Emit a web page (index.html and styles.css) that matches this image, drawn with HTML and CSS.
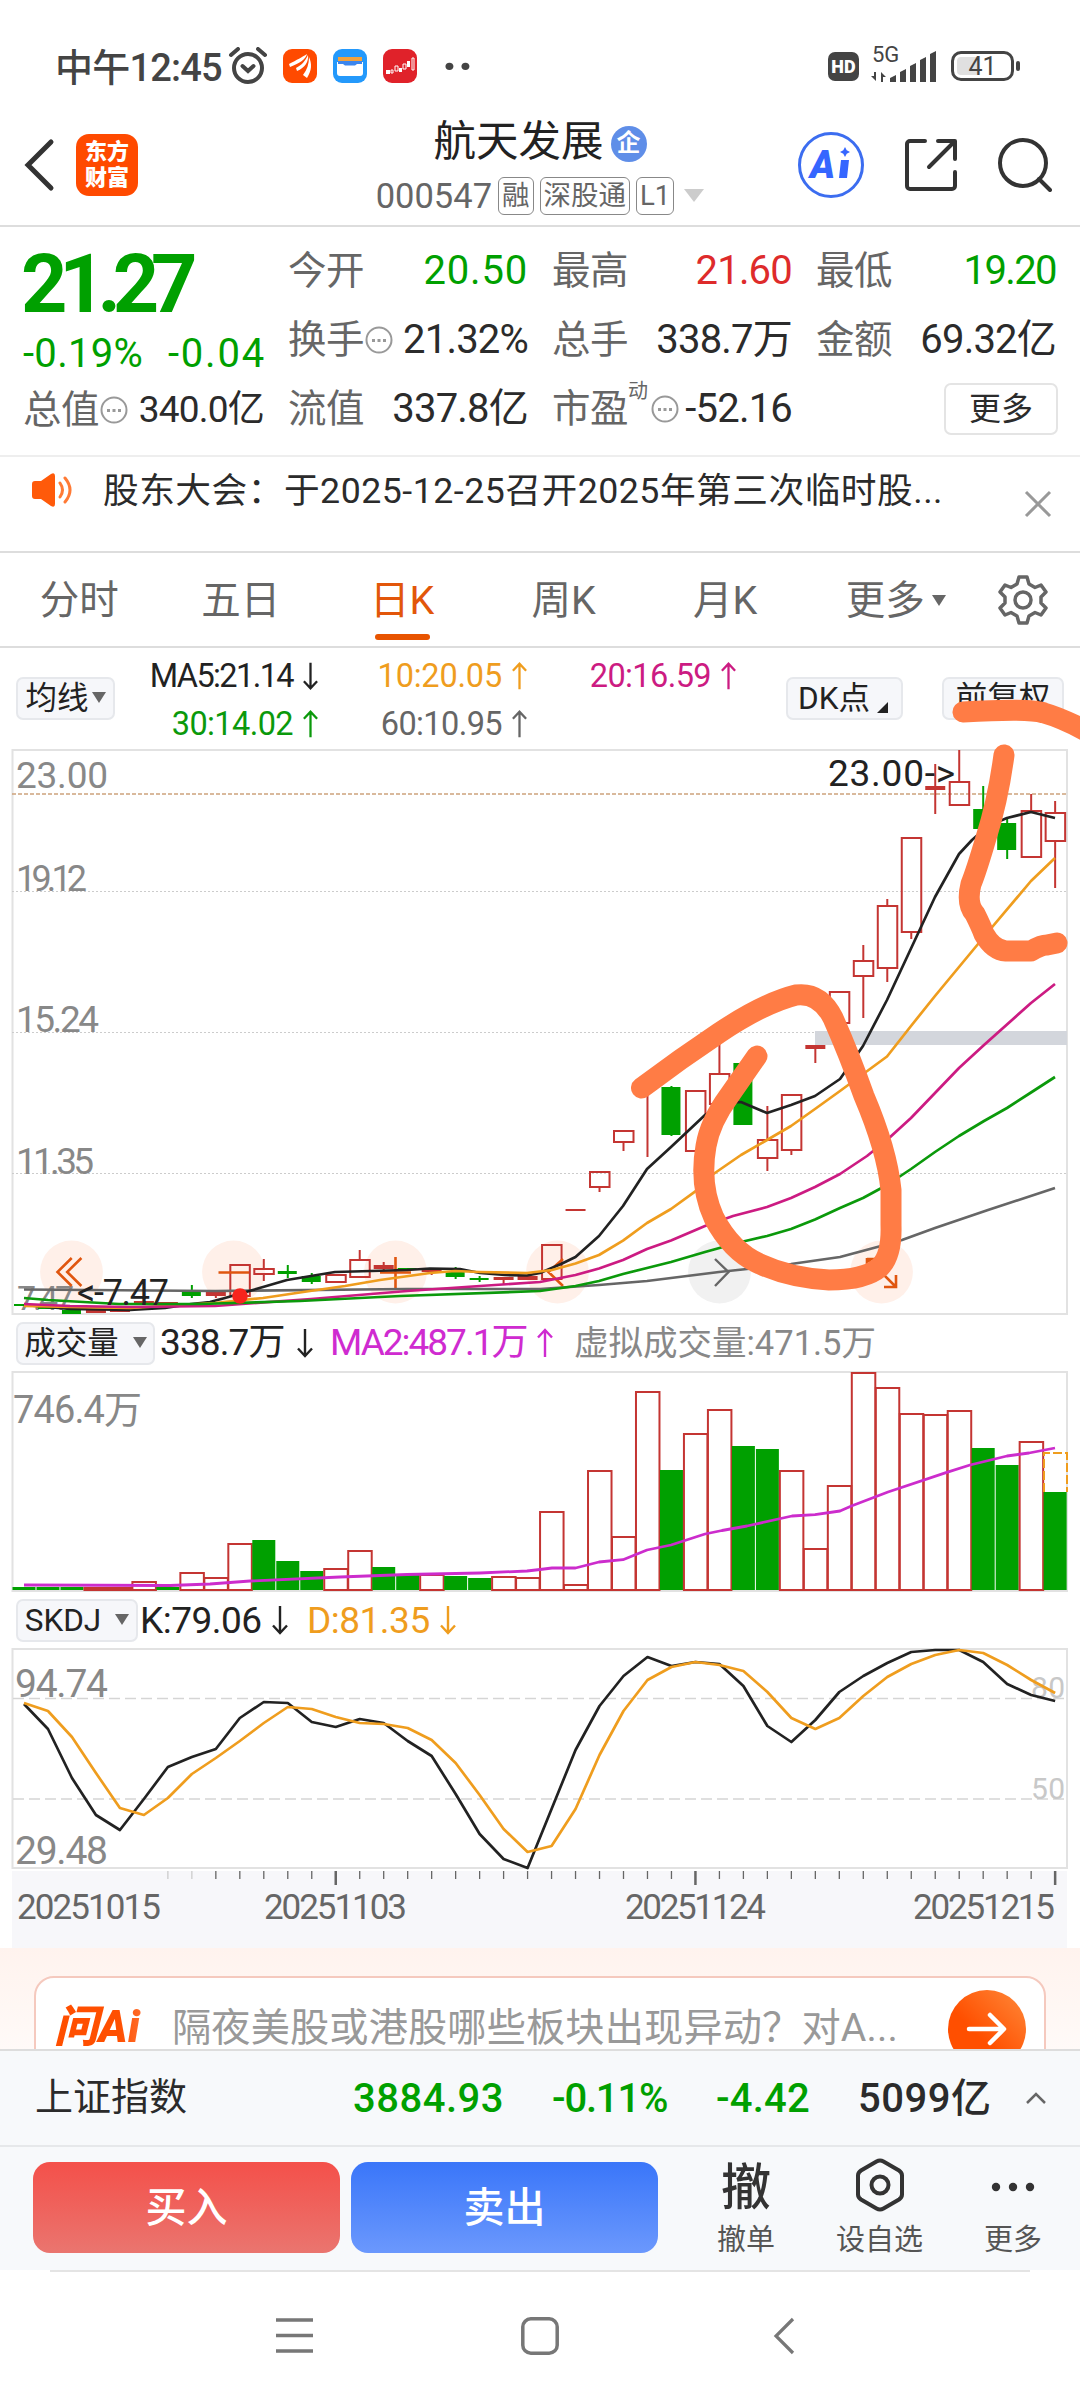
FILE: index.html
```html
<!DOCTYPE html>
<html lang="zh-CN">
<head>
    <meta charset="UTF-8">
    <meta name="viewport" content="width=device-width, initial-scale=1.0">
    <title>航天发展 000547</title>
    <link rel="stylesheet" href="styles.css">
</head>
<body>
    <svg width="0" height="0" class="defs">
        <symbol id="up" viewBox="0 0 18 30"><path d="M9 29V2M2 9.500L9 2l7 7.500" fill="none" stroke="currentColor" stroke-width="2.400"/></symbol>
        <symbol id="down" viewBox="0 0 18 30"><path d="M9 1v27M2 20.500L9 28l7-7.500" fill="none" stroke="currentColor" stroke-width="2.400"/></symbol>
        <symbol id="info" viewBox="0 0 28 28"><circle cx="14" cy="14" r="12.500" fill="none" stroke="#999" stroke-width="2"/><path d="M7 13h3v3H7zm5.500 0h3v3h-3zm5.500 0h3v3h-3z" fill="#999"/></symbol>
    </svg>

    <div class="status">
        <span class="clock">中午12:45</span>
        <svg class="alarm" width="40" height="38" viewBox="0 0 40 38" fill="none" stroke="#444" stroke-width="4" stroke-linecap="round"><circle cx="20" cy="21" r="14"/><path d="M14.500 19l5.500 5 5.500-5M3 8l7-6M37 8l-7-6"/></svg>
        <svg class="app" width="34" height="34" viewBox="0 0 34 34"><rect width="34" height="34" rx="9" fill="#ff4a00"/><path d="M6 15C14 11 19 8 24 5c-1 5-7 9-17 13zM13 19c6-3 9-7 12-13 1 6-3 13-11 16zM20 26c4-5 6-11 6-18 3 7 3 13-2 21z" fill="#fff"/></svg>
        <svg class="app" width="34" height="34" viewBox="0 0 34 34"><rect width="34" height="34" rx="9" fill="#2499fb"/><rect x="5" y="8" width="24" height="5" fill="#f3a23c"/><path d="M4 13h26v11a3 3 0 0 1-3 3H7a3 3 0 0 1-3-3z" fill="#fff"/><path d="M5 12h24v3h-5l-2 1.500H12L10 15H5z" fill="#3b86ee"/></svg>
        <svg class="app" width="34" height="34" viewBox="0 0 34 34"><rect width="34" height="34" rx="9" fill="#e0222a"/><path d="M3 21h4v4H3zM16 19h3v4h-3zM24 12h3v6h-3z" fill="#fff"/><path d="M8 21h2v3H8zM12 17h3v5h-3zM20 15h3v5h-3zM29 9h2v12h-2z" fill="none" stroke="#fff"/></svg>
        <span class="dots">··</span>
        <div class="status-right">
            <span class="hd">HD</span>
            <div class="signal">
                <span class="net">5G</span>
                <svg width="66" height="34" viewBox="0 0 66 34" fill="#444"><path d="M5 23v9l-5-5h3v-4zM10 33V23l5 5h-3v5zM19 33v-4l6-3v7zM29 33V23l6-3v13zM39 33V17l6-3v19zM49 33V11l6-3v25zM59 33V5l6-3v31z"/></svg>
            </div>
            <div class="battery"><span>41</span></div>
        </div>
    </div>

    <div class="header">
        <div class="header-left">
            <svg width="34" height="54" viewBox="0 0 34 54"><path d="M29 4L6 27l23 23" fill="none" stroke="#333" stroke-width="5" stroke-linecap="round"/></svg>
            <div class="logo">东方<br>财富</div>
        </div>
        <div class="header-title">
            <div class="name">航天发展<span class="qi">企</span></div>
            <div class="code">000547<span class="tag">融</span><span class="tag">深股通</span><span class="tag">L1</span><i class="tri-light"></i></div>
        </div>
        <div class="header-right">
            <svg width="66" height="66" viewBox="0 0 66 66"><circle cx="33" cy="33" r="31.500" fill="none" stroke="#3c6df0" stroke-width="3"/><text x="12" y="46" class="ai-text">A</text><path d="M43 28h8l-2 18h-8zM47 15l1.700 3.300L52 20l-3.300 1.700L47 25l-1.700-3.300L42 20l3.300-1.700z" fill="#3566ff"/></svg>
            <svg width="54" height="54" viewBox="0 0 54 54" fill="none" stroke="#333" stroke-width="4" stroke-linecap="round" stroke-linejoin="round"><path d="M21 3H6a3 3 0 0 0-3 3v42a3 3 0 0 0 3 3h42a3 3 0 0 0 3-3V34M34 3h17v18M50 4L25 29"/></svg>
            <svg width="54" height="54" viewBox="0 0 54 54" fill="none" stroke="#333" stroke-width="4" stroke-linecap="round"><circle cx="25" cy="25" r="23"/><path d="M41 41l11 11"/></svg>
        </div>
    </div>

    <div class="quote">
        <div class="quote-main">
            <div class="price">21.27</div>
            <div class="change"><span>-0.19%</span><span class="diff">-0.04</span></div>
            <div class="item"><label>总值</label><svg class="info" width="28" height="28"><use href="#info"/></svg><b>340.0亿</b></div>
        </div>
        <div class="quote-grid">
            <div class="item"><label>今开</label><b class="green open">20.50</b></div>
            <div class="item"><label>最高</label><b class="red">21.60</b></div>
            <div class="item"><label>最低</label><b class="green low">19.20</b></div>
            <div class="item"><label>换手</label><svg class="info" width="28" height="28"><use href="#info"/></svg><b>21.32%</b></div>
            <div class="item"><label>总手</label><b>338.7万</b></div>
            <div class="item"><label>金额</label><b>69.32亿</b></div>
            <div class="item"><label>流值</label><b>337.8亿</b></div>
            <div class="item"><label>市盈</label><sup>动</sup><svg class="info" width="28" height="28"><use href="#info"/></svg><b>-52.16</b></div>
            <div class="item"><button class="more">更多</button></div>
        </div>
    </div>

    <div class="notice">
        <svg width="42" height="34" viewBox="0 0 42 34"><path d="M1 11q0-3 3-3h6L20 1q4-2 4 2v28q0 4-4 2l-10-7H4q-3 0-3-3z" fill="#ff5a0a"/><path d="M29 10q5 7 0 14M34 5q10 12 0 24" fill="none" stroke="#ff7a35" stroke-width="3" stroke-linecap="round"/></svg>
        <p>股东大会：于2025-12-25召开2025年第三次临时股...</p>
        <svg class="close" width="28" height="28" viewBox="0 0 28 28"><path d="M2 2l24 24M26 2L2 26" stroke="#999" stroke-width="3"/></svg>
    </div>

    <div class="tabs">
        <span>分时</span>
        <span>五日</span>
        <span class="active">日K</span>
        <span>周K</span>
        <span>月K</span>
        <span>更多<i class="tri"></i></span>
        <svg width="50" height="52" viewBox="0 0 50 52" fill="none" stroke="#666" stroke-width="3.500" stroke-linejoin="round"><path d="M21 3h8l2 7 6 3.500 6-2.500 5 7-5 5v6l5 5-5 7-6-2.500-6 3.500-2 7h-8l-2-7-6-3.500-6 2.500-5-7 5-5v-6l-5-5 5-7 6 2.500 6-3.500z"/><circle cx="25" cy="26" r="8"/></svg>
    </div>

    <div class="ma-row">
        <button class="pill">均线<i class="tri"></i></button>
        <div class="ma-list">
            <span class="c-black ma5">MA5:21.14<svg><use href="#down"/></svg></span>
            <span class="c-orange ma10">10:20.05<svg><use href="#up"/></svg></span>
            <span class="c-pink">20:16.59<svg><use href="#up"/></svg></span>
            <span class="c-green">30:14.02<svg><use href="#up"/></svg></span>
            <span class="c-gray">60:10.95<svg><use href="#up"/></svg></span>
        </div>
        <button class="pill dk">DK点<i class="corner"></i></button>
        <button class="pill fq">前复权</button>
    </div>

    <svg id="kline" class="chart" width="1080" height="566" viewBox="0 749 1080 566"></svg>

    <div class="sub-row">
        <button class="pill">成交量<i class="tri"></i></button>
        <span class="c-black v1">338.7万</span><svg class="c-black"><use href="#down"/></svg>
        <span class="c-violet v2">MA2:487.1万</span><svg class="c-violet"><use href="#up"/></svg>
        <span class="c-mute v3">虚拟成交量:471.5万</span>
    </div>

    <svg id="volume" class="chart" width="1080" height="221" viewBox="0 1371 1080 221"></svg>

    <div class="sub-row skdj-row">
        <button class="pill">SKDJ<i class="tri"></i></button>
        <span class="c-black s1">K:79.06</span><svg class="c-black"><use href="#down"/></svg>
        <span class="c-orange s2">D:81.35</span><svg class="c-orange"><use href="#down"/></svg>
    </div>

    <svg id="skdj" class="chart" width="1080" height="300" viewBox="0 1648 1080 300"></svg>

    <div class="ask">
        <div class="ask-card">
            <span class="ask-logo">问Ai</span>
            <span class="ask-text">隔夜美股或港股哪些板块出现异动？对A...</span>
            <span class="ask-go"><svg width="44" height="36" viewBox="0 0 44 36"><path d="M4 18h34M25 4l14 14-14 14" fill="none" stroke="#fff" stroke-width="4.500" stroke-linecap="round" stroke-linejoin="round"/></svg></span>
        </div>
    </div>

    <div class="index-bar">
        <span class="i-name">上证指数</span>
        <b class="green i1">3884.93</b>
        <b class="green i2">-0.11%</b>
        <b class="green i3">-4.42</b>
        <b class="i4">5099亿</b>
        <svg width="22" height="14" viewBox="0 0 22 14"><path d="M2 12l9-9 9 9" fill="none" stroke="#666" stroke-width="2.500"/></svg>
    </div>

    <div class="trade">
        <button class="buy">买入</button>
        <button class="sell">卖出</button>
        <div class="act a1"><span class="che">撤</span>撤单</div>
        <div class="act a2"><span class="ico"><svg width="50" height="54" viewBox="0 0 50 54" fill="none" stroke="#333" stroke-width="4"><path d="M21.500 3.500q3.500-2 7 0L44 12.500q3 2 3 5v19q0 3-3 5l-15.500 9q-3.500 2-7 0L6 41.500q-3-2-3-5v-19q0-3 3-5z"/><circle cx="25" cy="27" r="8.500"/></svg></span>设自选</div>
        <div class="act a3"><span class="ico"><svg width="44" height="54" viewBox="0 0 44 54" fill="#333"><circle cx="5" cy="29" r="4.200"/><circle cx="22" cy="29" r="4.200"/><circle cx="39" cy="29" r="4.200"/></svg></span>更多</div>
    </div>

    <div class="nav">
        <svg width="38" height="38" viewBox="0 0 38 38"><path d="M0 3h37M0 18.500h37M0 34h37" stroke="#777" stroke-width="3.500"/></svg>
        <svg class="home" width="38" height="38" viewBox="0 0 38 38"><rect x="1.800" y="1.800" width="34.400" height="34.400" rx="8" fill="none" stroke="#777" stroke-width="3.500"/></svg>
        <svg width="22" height="38" viewBox="0 0 22 38"><path d="M20 2L3 19l17 17" fill="none" stroke="#777" stroke-width="3.200"/></svg>
    </div>

    <!-- hand drawn marks -->
    <svg class="marks" width="1080" height="700" viewBox="0 650 1080 700">
        <path d="M641.500 1088Q680 1059 719 1033Q764 1003 796 995Q820 992 833 1018Q849 1054 864 1096Q887 1150 891 1190V1225Q892 1255 880 1267Q865 1280 829 1280Q790 1278 760 1264Q732 1252 714 1218Q699 1185 706 1146Q710 1122 729 1096L757 1056"/>
        <path d="M1004 755Q998 800 986 838Q976 872 971 884Q966 904 975 914Q981 926 984 934Q993 950 1006 951H1031Q1041 945 1047 945L1057 943"/>
        <path d="M963 712Q1030 708 1044 713Q1062 718 1088 732"/>
    </svg>

    <script src="chart.js"></script>
</body>
</html>
```

FILE: chart.js
```js
const RED = '#c43532', GREEN = '#00a000';
const cx = i => 24 + i * 23.98;

function frame(top, bottom) {
    return `<rect x="12.500" y="${top}" width="1054.500" height="${bottom - top}" fill="none" stroke="#e2e2e2" stroke-width="2"/>`;
}
function line(points, color, w) {
    return `<polyline points="${points}" fill="none" stroke="${color}" stroke-width="${w || 2.7}" stroke-linejoin="round"/>`;
}
function label(t, x, y, w, color, size) {
    return `<text x="${x}" y="${y}" textLength="${w}" fill="${color}" font-size="${size || 37}">${t}</text>`;
}

// type, body top, body bottom, wick top, wick bottom (f = filled red)
const candles = [
    ['g',1304,1306],['g',1307,1309],['g',1310,1314],['f',1310,1313],['f',1308,1312],['f',1301,1303],['f',1302,1304],
    ['g',1291,1296,1285,1298],['f',1292,1296,1290,1298],['r',1265,1296],['r',1269,1274,1259,1281],['g',1271,1274,1265,1278],
    ['g',1276,1282,1273,1284],['r',1275,1282],['r',1260,1277,1250],['f',1265,1269,1262,1271],['g',1268,1270],['f',1270,1272,1270,1275],
    ['g',1272,1277,1267,1279],['g',1278,1280,1276,1282],['f',1277,1280,1277,1285],['f',1276,1280],['r',1245,1279],['f',1209,1211],
    ['r',1172,1187,1172,1192],['r',1131,1142,1131,1151],['f',1090,1092,1085,1157],['g',1087,1135,1086,1136],['r',1091,1151],
    ['r',1074,1104,1043],['g',1063,1125],['r',1140,1158,1106,1171],['r',1095,1150,1095,1155],['f',1045,1049,1045,1063],
    ['r',992,1023],['r',961,976,945,1018],['r',906,968,899,982],['r',838,932,838,939],['f',786,790,764,814],
    ['r',782,805,750],['g',809,829,786,830],['g',823,850,818,859],['r',811,857,794],['r',813,841,801,888]
];

const volumes = [
    'g1587','g1587','g1587','r1588','r1588','r1582','g1587','r1573','r1578','r1544','g1540','g1561','g1571','r1569','r1551',
    'g1567','g1575','r1575','g1576','g1578','r1577','r1578','r1512','r1585','r1471','r1537','r1392','g1470','r1434','r1410',
    'g1446','g1449','r1471','r1549','r1486','r1373','r1388','r1414','r1415','r1411','g1448','g1465','r1442','g1492'
];

const K = [1704,1729,1778,1815,1830,1799,1767,1757,1749,1718,1702,1703,1722,1727,1719,1723,1741,1756,1794,1834,1859,1868,
    1809,1750,1706,1676,1657,1666,1662,1664,1686,1726,1742,1720,1692,1676,1663,1652,1650,1650,1662,1684,1695,1701];
const D = [1703,1711,1737,1773,1808,1815,1798,1774,1758,1741,1723,1707,1709,1717,1723,1724,1728,1740,1763,1795,1829,1852,
    1846,1809,1755,1711,1680,1667,1662,1665,1671,1692,1718,1729,1718,1696,1677,1664,1655,1650,1653,1665,1680,1693];

function drawKline() {
    let s = frame(750, 1314);
    [891.5, 1032.5, 1173.5].forEach(y => {
        s += `<line x1="12" x2="1067" y1="${y}" y2="${y}" stroke="#ccc" stroke-dasharray="2 2"/>`;
    });
    s += '<line x1="12" x2="1067" y1="794" y2="794" stroke="#cda27c" stroke-width="1.600" stroke-dasharray="4 2"/>';
    s += '<rect x="815" y="1031" width="252" height="14" fill="#d3d6dc"/>';
    [71.5, 233.5, 395.5, 557.5, 719.5, 881.5].forEach((x, i) => {
        s += `<circle cx="${x}" cy="1272" r="31.400" fill="${i === 4 ? '#f1f1f1' : '#fff0e9'}"/>`;
    });
    s += label('23.00', 16, 788, 92, '#888') + label('19.12', 16, 891, 71, '#888', 36) + label('15.24', 16, 1032, 83, '#888') +
        label('11.35', 16, 1174, 78, '#888') + label('7.47', 17, 1310, 57, '#888', 34);

    candles.forEach((c, i) => {
        const [type, t, b] = c, x = cx(i);
        const wt = c[3] || t, wb = c[4] || b, color = type === 'g' ? GREEN : RED;
        if (wt < t) s += `<line x1="${x}" x2="${x}" y1="${wt}" y2="${t}" stroke="${color}" stroke-width="2"/>`;
        if (wb > b) s += `<line x1="${x}" x2="${x}" y1="${b}" y2="${wb}" stroke="${color}" stroke-width="2"/>`;
        if (type === 'r') s += `<rect x="${x - 9.5}" y="${t}" width="19.500" height="${b - t}" fill="none" stroke="${color}" stroke-width="2"/>`;
        else if (i !== 26) s += `<rect x="${x - 10}" y="${t}" width="${type === 'g' ? 19 : 20}" height="${b - t}" fill="${color}"/>`;
    });

    s += '<g fill="none" stroke="#e0560f" stroke-width="2.600"><path d="M71.700 1258L57.500 1272l14.200 14M81.400 1258L67.200 1272l14.200 14M218.500 1272.500H249M380 1272.500h31M395.500 1257v31M563 1259l-14.500 13 14.500 14M867 1259h12M867 1258v12M868 1259l27 27M884 1287h12v-12"/></g>';
    s += '<path d="M715 1259l13.500 13-13.500 14" fill="none" stroke="#666" stroke-width="2.400"/>';

    s += line('24,1289.500 215,1291 407,1289 540,1289 599,1285 623,1283 647,1281 671,1278 719,1272 747,1269 791,1264 840,1257 881,1246 902,1240 935,1228 988,1210 1055,1188', '#666');
    s += line('24,1305 70,1309 130,1310 165,1308 191,1304 210,1302 225,1298 239,1294 263,1287 287,1280 311,1276 335,1272 407,1270 430,1268.500 460,1269 480,1273 505,1275 527,1275.500 540,1273 561,1264 575.500,1257 599,1236 623,1206 647,1169 671,1147 705,1115 728,1103 741,1102 767,1113 791,1105 815,1096 840,1079 863,1046 887,1000 911,948.500 935,897 959,854 972,840 988,826 1007,818 1031,812 1055,818', '#222');
    s += line('24,1306 70,1307 130,1308 215,1303 263,1298 310,1291 345,1286 380,1280 430,1273 455,1271 480,1272 527,1273 552,1270 575.500,1263.500 599,1255 623,1240.600 647,1223 671,1209 695,1191.600 712,1175 741,1155 767,1140 791,1126 815,1109 840,1091 887,1056.500 911,1026 935,996 959,967 988,932 1031,881 1055,858', '#ef9d1e');
    s += line('24,1304 70,1306 130,1307 215,1306 311,1299 407,1291 480,1286 540,1282 575.500,1275 599,1268.500 623,1260 647,1249 671,1240.600 705,1226 733,1216 767,1207 791,1198 815,1187 840,1174 867,1156 888,1139 911,1118 935,1093 959,1068 984,1045 1031,1003 1055,984', '#cc1b82');
    s += line('24,1298 48,1300 119,1304 200,1304 300,1301 400,1296 540,1291 575.500,1286 599,1281 623,1274 647,1268 671,1262 705,1252 741,1242 767,1236 791,1229 815,1219.500 840,1208 863,1198 887,1185 911,1169 935,1152 959,1136 984,1121 1007,1108 1031,1092.500 1055,1077', '#0b990b');
    s += '<circle cx="240" cy="1296" r="7.800" fill="#f7241d"/>';
    s += label('&lt;-7.47', 77, 1305, 92, '#222', 36) + label('23.00-&gt;', 828, 786, 127, '#222', 37);
    document.getElementById('kline').innerHTML = s;
}

function drawVolume() {
    let s = frame(1372, 1591) + label('746.4万', 13, 1423, 129, '#888', 38);
    volumes.forEach((v, i) => {
        const t = +v.slice(1), x = 12.5 + i * 23.98;
        if (v[0] === 'g') s += `<rect x="${x}" y="${t}" width="23" height="${1590 - t}" fill="${GREEN}"/>`;
        else s += `<rect x="${x}" y="${t}" width="23.500" height="${1590 - t}" fill="none" stroke="${RED}" stroke-width="2"/>`;
    });
    s += '<path d="M1044 1492v-39h23v39" fill="none" stroke="#ef9d1e" stroke-width="2" stroke-dasharray="9 3"/>';
    s += line('24,1585 170,1585.500 210,1584 250,1581 340,1577 407,1574.500 480,1573 527,1571 540,1569.500 552,1568 575.500,1568 599,1562 623,1559.700 647,1550 671,1545 705,1534 722,1530.500 747,1526 792,1516 815,1514.700 840,1511 852,1505.700 888,1492 946,1472.700 970,1465 1007,1456 1029,1453 1055,1448', '#cc2ccc', 2.8);
    document.getElementById('volume').innerHTML = s;
}

function drawSkdj() {
    let s = '<rect x="12" y="1871" width="1055" height="77" fill="#f7f7fa"/>' + frame(1649, 1868);
    [1698.5, 1799].forEach(y => {
        s += `<line x1="13" x2="1066" y1="${y}" y2="${y}" stroke="#d5d5d5" stroke-width="1.500" stroke-dasharray="11 5"/>`;
    });
    s += label('94.74', 15, 1697, 93, '#888', 39) + label('29.48', 15, 1864, 93, '#888', 39);
    s += label('80', 1031, 1698, 34, '#c8c8c8', 30) + label('50', 1031, 1799, 34, '#c8c8c8', 30);
    s += line(K.map((y, i) => cx(i) + ',' + y).join(' '), '#222') + line(D.map((y, i) => cx(i) + ',' + y).join(' '), '#ef9d1e');
    for (let i = 6; i < 44; i++) {
        const big = i === 13 || i === 28 || i === 43;
        s += `<line x1="${cx(i)}" x2="${cx(i)}" y1="1871" y2="${big ? 1885 : 1879}" stroke="${i < 8 ? '#ccc' : '#666'}" stroke-width="${big ? 2.5 : 1.3}"/>`;
    }
    s += label('20251015', 17, 1919, 144, '#666', 35) + label('20251103', 264, 1919, 143, '#666', 35) +
        label('20251124', 625, 1919, 141, '#666', 35) + label('20251215', 913, 1919, 142, '#666', 35);
    document.getElementById('skdj').innerHTML = s;
}

drawKline();
drawVolume();
drawSkdj();
```

FILE: styles.css
```css
* {
    box-sizing: border-box;
}
body {
    margin: 0;
    width: 1080px;
    height: 2400px;
    position: relative;
    overflow: hidden;
    background: #fff;
    color: #2b2b2b;
    font-family: Roboto, "Noto Sans CJK SC", sans-serif;
}
button {
    font-family: inherit;
    color: inherit;
    padding: 0;
    border: none;
}
b {
    font-weight: normal;
}
.defs {
    display: none;
}
.green {
    color: #00a000;
}
.red {
    color: #de2b2b;
}
.c-black { color: #222; }
.c-orange { color: #ef9d1e; }
.c-pink { color: #cc1b82; }
.c-green { color: #0b990b; }
.c-gray { color: #666; }
.c-violet { color: #cf2bd0; }
.c-mute { color: #888; }

/* status bar */
.status {
    height: 112px;
    padding: 20px 60px 0 55px;
    display: flex;
    align-items: center;
    color: #444;
}
.clock {
    width: 173px;
    padding-bottom: 3px;
    font-size: 38px;
    font-weight: 500;
    letter-spacing: -0.8px;
    white-space: nowrap;
}
.alarm {
    margin-right: 15px;
}
.app {
    margin-right: 16px;
}
.dots {
    font-size: 50px;
    letter-spacing: 1px;
    font-weight: bold;
    margin-left: 9px;
}
.status-right {
    margin-left: auto;
    display: flex;
    align-items: center;
}
.hd {
    width: 31px;
    height: 29px;
    line-height: 29px;
    margin-right: 12px;
    border-radius: 7px;
    background: #444;
    color: #fff;
    text-align: center;
    font-size: 18px;
    font-weight: 900;
}
.signal {
    position: relative;
    height: 34px;
    margin-right: 14px;
}
.net {
    position: absolute;
    left: 1px;
    top: -4px;
    font-size: 22px;
    line-height: 20px;
}
.battery {
    width: 63px;
    height: 30px;
    border: 3px solid #444;
    border-radius: 10px;
    position: relative;
    background: linear-gradient(90deg, #e0e0e0 42%, #fff 42%);
    box-shadow: inset 0 0 0 3px #fff;
    text-align: center;
    font-size: 25px;
    line-height: 25px;
    margin-right: 6px;
}
.battery::after {
    content: "";
    position: absolute;
    right: -9px;
    top: 7px;
    width: 4px;
    height: 10px;
    border-radius: 2px;
    background: #444;
}

/* header */
.header {
    height: 115px;
    padding: 0 28px 0 22px;
    border-bottom: 2px solid #ddd;
    display: grid;
    grid-template-columns: 1fr auto 1fr;
}
.header-left, .header-right {
    display: flex;
    align-items: center;
    height: 105px;
}
.logo {
    width: 62px;
    height: 62px;
    margin-left: 20px;
    padding-top: 5px;
    border-radius: 13px;
    background: #ff4a00;
    color: #fff;
    font-size: 22px;
    font-weight: 900;
    line-height: 26px;
    text-align: center;
}
.header-title {
    display: flex;
    flex-direction: column;
    align-items: center;
    padding: 4px 0 0 6px;
}
.name {
    display: flex;
    align-items: center;
    height: 48px;
    line-height: 54px;
    font-size: 42.5px;
    color: #222;
}
.qi {
    width: 36px;
    height: 36px;
    margin-left: 7px;
    margin-top: 3px;
    border-radius: 50%;
    background: #5f8ee8;
    color: #fff;
    font-size: 24px;
    font-weight: bold;
    line-height: 34px;
    text-align: center;
}
.name {
    padding-top: 4px;
}
.code {
    display: flex;
    align-items: center;
    height: 63px;
    font-size: 34.5px;
    color: #666;
}
.tag {
    height: 38px;
    margin-left: 6px;
    padding: 0 3px;
    border: 1.5px solid #888;
    border-radius: 6px;
    font-size: 27.5px;
    line-height: 35px;
}
.tri-light {
    margin-left: 10px;
    border: 10px solid transparent;
    border-top: 13px solid #ccc;
    border-bottom: 0;
}
.header-right {
    justify-content: flex-end;
    gap: 40px;
}
.ai-text {
    font: italic 900 38px Roboto, sans-serif;
    fill: #3566ff;
}

/* quote */
.quote {
    height: 230px;
    padding: 9px 23px 0 24px;
    display: flex;
    gap: 24px;
    border-bottom: 2px solid #eee;
}
.quote-main {
    width: 240px;
}
.price {
    height: 94px;
    margin-left: -3px;
    line-height: 98px;
    font-size: 81px;
    font-weight: 700;
    letter-spacing: -8.2px;
    color: #00a000;
}
.change {
    display: flex;
    justify-content: space-between;
    height: 45px;
    line-height: 47px;
    font-size: 40px;
    letter-spacing: 0.3px;
    margin-left: -1px;
    color: #00a000;
}
.change .diff {
    margin-right: -2px;
    letter-spacing: 1.8px;
}
.quote-grid {
    display: grid;
    grid-template-columns: repeat(3, 240px);
    grid-auto-rows: 69px;
    column-gap: 24px;
}
.item {
    display: flex;
    align-items: center;
    height: 69px;
    font-size: 40px;
    letter-spacing: -0.8px;
    line-height: 60px;
    white-space: nowrap;
}
.item label {
    font-size: 38.5px;
    line-height: 56px;
    color: #666;
    letter-spacing: -0.5px;
}
.item b {
    margin-left: auto;
}
.item .open {
    letter-spacing: 0.8px;
}
.item .low {
    letter-spacing: -1.6px;
}
.quote-main .item b {
    font-size: 37px;
}
.quote-main .item label {
    margin-left: -1px;
}
.item sup {
    align-self: flex-start;
    margin-top: 5px;
    font-size: 20px;
    line-height: 24px;
    color: #666;
}
.info {
    margin-left: 1px;
}
.item sup + .info {
    margin-left: 4px;
}
.more {
    width: 114px;
    height: 52px;
    margin: 0 -2px 0 auto;
    border: 2px solid #e4e4e4;
    border-radius: 7px;
    background: #fff;
    font-size: 32px;
    line-height: 46px;
}

/* notice */
.notice {
    height: 96px;
    padding: 0 28px 0 31px;
    display: flex;
    border-bottom: 2px solid #ddd;
}
.notice > svg {
    margin-top: 16px;
}
.notice p {
    margin: 8px 0 0 30px;
    line-height: 53px;
    font-size: 35.7px;
    letter-spacing: 0.5px;
    white-space: nowrap;
}
.notice .close {
    margin: 33px 0 0 auto;
}

/* period tabs */
.tabs {
    height: 95px;
    padding-right: 32px;
    display: flex;
    align-items: center;
    border-bottom: 2px solid #ddd;
}
.tabs span {
    position: relative;
    width: 161.5px;
    height: 93px;
    padding-right: 3px;
    line-height: 95px;
    text-align: center;
    font-size: 39.5px;
    color: #666;
}
.tabs span:nth-child(6) {
    padding-left: 18px;
}
.tabs svg {
    margin-left: auto;
}
.tabs .active {
    color: #e2560a;
}
.tabs .active::after {
    content: "";
    position: absolute;
    left: 52px;
    bottom: 6px;
    width: 55px;
    height: 6px;
    border-radius: 3px;
    background: #e85400;
}
.tri {
    display: inline-block;
    margin-left: 7px;
    border: 7px solid transparent;
    border-top: 11px solid #666;
    border-bottom: 0;
    vertical-align: 8px;
}

/* moving averages */
.ma-row {
    height: 101px;
    padding-left: 16px;
    display: flex;
    align-items: center;
}
.pill {
    height: 43px;
    border: 2px solid #e6e8ec;
    border-radius: 7px;
    background: #f6f7fa;
    font-size: 31.500px;
    line-height: 37px;
    text-align: center;
    white-space: nowrap;
    color: #222;
}
.ma-row .pill {
    width: 99px;
}
.ma-row .pill .tri {
    margin-left: 3px;
    vertical-align: 6px;
}
.ma-list {
    width: 622px;
    padding-top: 3px;
    display: grid;
    grid-template-columns: 204px 209px 209px;
    grid-auto-rows: 48px;
}
.ma-list span {
    display: flex;
    align-items: center;
    justify-content: flex-end;
    font-size: 32.500px;
    letter-spacing: -0.6px;
}
.ma-list .ma5 {
    letter-spacing: -1.6px;
}
.ma-list .ma10 {
    letter-spacing: -0.2px;
}
.ma-list svg {
    width: 17px;
    height: 30px;
    margin-left: 9px;
}
.ma-row .dk {
    width: 117px;
    margin-left: 49px;
    text-align: left;
    padding-left: 10px;
}
.corner {
    display: inline-block;
    margin-left: 7px;
    border-left: 11px solid transparent;
    border-bottom: 11px solid #222;
    vertical-align: -4px;
}
.ma-row .fq {
    width: 122px;
    margin-left: 39px;
}

/* charts */
.chart {
    display: block;
}
.sub-row {
    height: 56px;
    padding: 0 0 0 16px;
    display: flex;
    align-items: center;
    font-size: 37px;
    line-height: 56px;
    white-space: nowrap;
}
.sub-row .pill {
    width: 139px;
    margin-right: 5px;
    line-height: 40px;
}
.sub-row .pill .tri {
    margin-left: 14px;
    vertical-align: 6px;
}
.sub-row svg {
    width: 18px;
    height: 34px;
}
.sub-row span {
    height: 56px;
}
.v1 { width: 136px; letter-spacing: -0.9px; }
.v2 { width: 206px; margin-left: 16px; letter-spacing: -2px; }
.v3 { margin-left: 20px; font-size: 34.500px; }
.skdj-row .pill {
    width: 122px;
    margin-right: 2px;
}
.skdj-row .pill .tri {
    margin-left: 14px;
}
.skdj-row span {
    line-height: 58px;
}
.s1 { width: 131px; letter-spacing: -0.5px; }
.s2 { width: 132px; margin-left: 18px; letter-spacing: -0.5px; }

/* ask ai */
.ask {
    height: 101px;
    padding: 28px 34px 0;
    overflow: hidden;
    background: linear-gradient(#fff3ee, #fffaf8);
}
.ask-card {
    height: 110px;
    padding: 0 18px 5px;
    display: flex;
    align-items: center;
    border: 2px solid #f5c9be;
    border-radius: 20px;
    background: #fff;
}
.ask-logo {
    width: 118px;
    height: 54px;
    margin-top: -4px;
    font-size: 44px;
    line-height: 54px;
    letter-spacing: 0.5px;
    font-weight: 900;
    font-style: italic;
    background: linear-gradient(90deg, #ff4f00 55%, #ff9564);
    -webkit-background-clip: text;
    color: transparent;
}
.ask-text {
    height: 50px;
    margin-top: -3px;
    font-size: 39.200px;
    line-height: 52px;
    letter-spacing: 0.15px;
    color: #999;
    white-space: nowrap;
}
.ask-go {
    width: 78px;
    height: 78px;
    margin-left: auto;
    display: flex;
    align-items: center;
    justify-content: center;
    border-radius: 50%;
    background: linear-gradient(45deg, #ff4f00 40%, #ff8a3a);
}

/* index and trade bars */
.index-bar {
    height: 96px;
    padding: 0 33px 0 35px;
    display: flex;
    align-items: center;
    background: #f7f9fb;
    border-top: 2px solid #ddd;
    font-size: 38px;
    line-height: 93px;
    white-space: nowrap;
}
.index-bar b {
    height: 94px;
    font-size: 40px;
    font-weight: 500;
    line-height: 96px;
}
.index-bar svg {
    margin-left: auto;
}
.i-name { width: 318px; height: 94px; }
.i1 { width: 199px; letter-spacing: 0.5px; }
.i2 { width: 164px; letter-spacing: -1.2px; }
.i3 { width: 142px; letter-spacing: 0.2px; }
.i4 { letter-spacing: 0.5px; }
.trade {
    height: 125px;
    padding: 15px 0 0 33px;
    display: flex;
    background: #f7f9fb;
    border-top: 2px solid #e6e8ea;
}
.buy, .sell {
    width: 307px;
    height: 91px;
    padding-bottom: 7px;
    border-radius: 17px;
    color: #fff;
    font-size: 41px;
    font-weight: 500;
}
.buy {
    background: linear-gradient(#f4504a, #ea756f);
}
.sell {
    margin-left: 11px;
    background: linear-gradient(#3a76f9, #6b98fd);
}
.act {
    display: flex;
    flex-direction: column;
    align-items: center;
    margin-top: -4px;
    font-size: 29px;
    line-height: 46px;
    color: #555;
}
.act .ico, .act .che {
    height: 59px;
}
.che {
    font-size: 50px;
    font-weight: 500;
    line-height: 61px;
    color: #333;
}
.a1 { margin-left: 59px; }
.a2 { margin-left: 61px; }
.a3 { margin-left: 61px; }

/* system navigation */
.nav {
    height: 130px;
    margin: 0 50px;
    padding: 45px 235px 0 226px;
    display: flex;
    justify-content: space-between;
    border-top: 2px solid #e4e4e4;
}
.nav .home {
    margin-right: 8px;
}
.marks {
    position: absolute;
    left: 0;
    top: 650px;
    fill: none;
    stroke: #ff7c45;
    stroke-width: 21px;
    stroke-linecap: round;
    stroke-linejoin: round;
}
```
